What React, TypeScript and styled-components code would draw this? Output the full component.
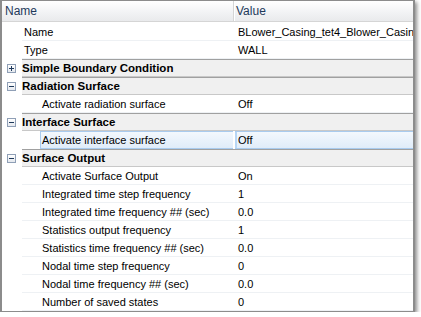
import React from 'react';
import styled, { createGlobalStyle } from 'styled-components';

type Entry =
  | { kind: 'prop'; name: string; value: string; indent?: boolean; selected?: boolean }
  | { kind: 'cat'; name: string; open: boolean };

const rows: Entry[] = [
  { kind: 'prop', name: 'Name', value: 'BLower_Casing_tet4_Blower_Casin' },
  { kind: 'prop', name: 'Type', value: 'WALL' },
  { kind: 'cat', name: 'Simple Boundary Condition', open: false },
  { kind: 'cat', name: 'Radiation Surface', open: true },
  { kind: 'prop', name: 'Activate radiation surface', value: 'Off', indent: true },
  { kind: 'cat', name: 'Interface Surface', open: true },
  { kind: 'prop', name: 'Activate interface surface', value: 'Off', indent: true, selected: true },
  { kind: 'cat', name: 'Surface Output', open: true },
  { kind: 'prop', name: 'Activate Surface Output', value: 'On', indent: true },
  { kind: 'prop', name: 'Integrated time step frequency', value: '1', indent: true },
  { kind: 'prop', name: 'Integrated time frequency ## (sec)', value: '0.0', indent: true },
  { kind: 'prop', name: 'Statistics output frequency', value: '1', indent: true },
  { kind: 'prop', name: 'Statistics time frequency ## (sec)', value: '0.0', indent: true },
  { kind: 'prop', name: 'Nodal time step frequency', value: '0', indent: true },
  { kind: 'prop', name: 'Nodal time frequency ## (sec)', value: '0.0', indent: true },
  { kind: 'prop', name: 'Number of saved states', value: '0', indent: true },
];

const GlobalStyle = createGlobalStyle`
  body {
    margin: 0;
    background: #ffffff;
    font-family: "Liberation Sans", Arial, sans-serif;
    font-size: 11px;
    color: #000;
  }
`;

const Frame = styled.div`
  width: 415px;
  height: 312px;
  box-sizing: border-box;
  border: 1px solid #8c8c8c;
  border-left-width: 2px;
  border-right-width: 2px;
  background: #fff;
  box-shadow: 2px 2px 4px rgba(0, 0, 0, 0.45);
  overflow: hidden;
`;

const Header = styled.div`
  display: grid;
  grid-template-columns: 231px 1fr;
  height: 20px;
  background: linear-gradient(#ffffff, #f1f2f4 60%, #e9eaec);
  border-bottom: 1px solid #d5d5d5;
  margin-bottom: 1px;
`;

const HeadCell = styled.div<{ $divider?: boolean }>`
  display: flex;
  align-items: center;
  padding-left: ${(p) => (p.$divider ? '2px' : '3px')};
  color: #1e395b;
  font-size: 12px;
  border-left: ${(p) => (p.$divider ? '1px solid #d5d5d5' : 'none')};
  box-shadow: ${(p) => (p.$divider ? 'inset 1px 0 #ffffff' : 'none')};
`;

const Row = styled.div`
  display: grid;
  grid-template-columns: 20px 211px 1fr;
  height: 18px;
`;

const Margin = styled.div`
  display: flex;
  align-items: center;
  padding-left: 5px;
`;

const NameCell = styled.div<{ $indent?: boolean; $selected?: boolean }>`
  display: flex;
  align-items: center;
  padding-left: ${(p) => (p.$indent ? '20px' : '2px')};
  white-space: nowrap;
  overflow: hidden;
  border-bottom: 1px solid #eef1f4;
  box-sizing: border-box;
  ${(p) =>
    p.$selected &&
    `
    margin-left: 18px;
    padding-left: 1px;
    background: linear-gradient(#f3f8fd, #e0ecf9);
    border: 1px solid #a9cbee;
    border-right: none;
  `}
`;

const ValueCell = styled.div<{ $selected?: boolean }>`
  display: flex;
  align-items: center;
  padding-left: 5px;
  white-space: nowrap;
  overflow: hidden;
  border-bottom: 1px solid #eef1f4;
  box-sizing: border-box;
  ${(p) =>
    p.$selected &&
    `
    background: linear-gradient(#f3f8fd, #e0ecf9);
    border: 1px solid #a9cbee;
    border-left: none;
    border-right: none;
    box-shadow: inset 2px 0 0 #b7d6f5;
    margin-left: 2px;
    padding-left: 3px;
  `}
`;

const CatRow = styled.div`
  display: grid;
  grid-template-columns: 20px 1fr;
  height: 18px;
`;

const CatLabel = styled.div`
  display: flex;
  align-items: center;
  padding-left: 0;
  font-weight: bold;
  font-size: 11.5px;
  background: #f0f0f0;
  border-top: 1px solid #a0a0a0;
  border-bottom: 1px solid #c8c8c8;
  box-sizing: border-box;
`;

const Expander = styled.div`
  width: 9px;
  height: 9px;
  box-sizing: border-box;
  border: 1px solid #8f9fb6;
  background: linear-gradient(#ffffff, #e4e8ee);
  display: flex;
  align-items: center;
  justify-content: center;
`;

const Toggle = ({ open }: { open: boolean }) => (
  <Expander>
    <svg width="7" height="7" viewBox="0 0 7 7">
      <rect x="1" y="3" width="5" height="1" fill="#1e395b" />
      {!open && <rect x="3" y="1" width="1" height="5" fill="#1e395b" />}
    </svg>
  </Expander>
);

const App = () => (
  <>
    <GlobalStyle />
    <Frame>
      <Header>
        <HeadCell>Name</HeadCell>
        <HeadCell $divider>Value</HeadCell>
      </Header>
      {rows.map((r) =>
        r.kind === 'cat' ? (
          <CatRow key={r.name}>
            <Margin>
              <Toggle open={r.open} />
            </Margin>
            <CatLabel>{r.name}</CatLabel>
          </CatRow>
        ) : (
          <Row key={r.name}>
            <Margin />
            <NameCell $indent={r.indent} $selected={r.selected}>
              {r.name}
            </NameCell>
            <ValueCell $selected={r.selected}>{r.value}</ValueCell>
          </Row>
        )
      )}
    </Frame>
  </>
);

export default App;
